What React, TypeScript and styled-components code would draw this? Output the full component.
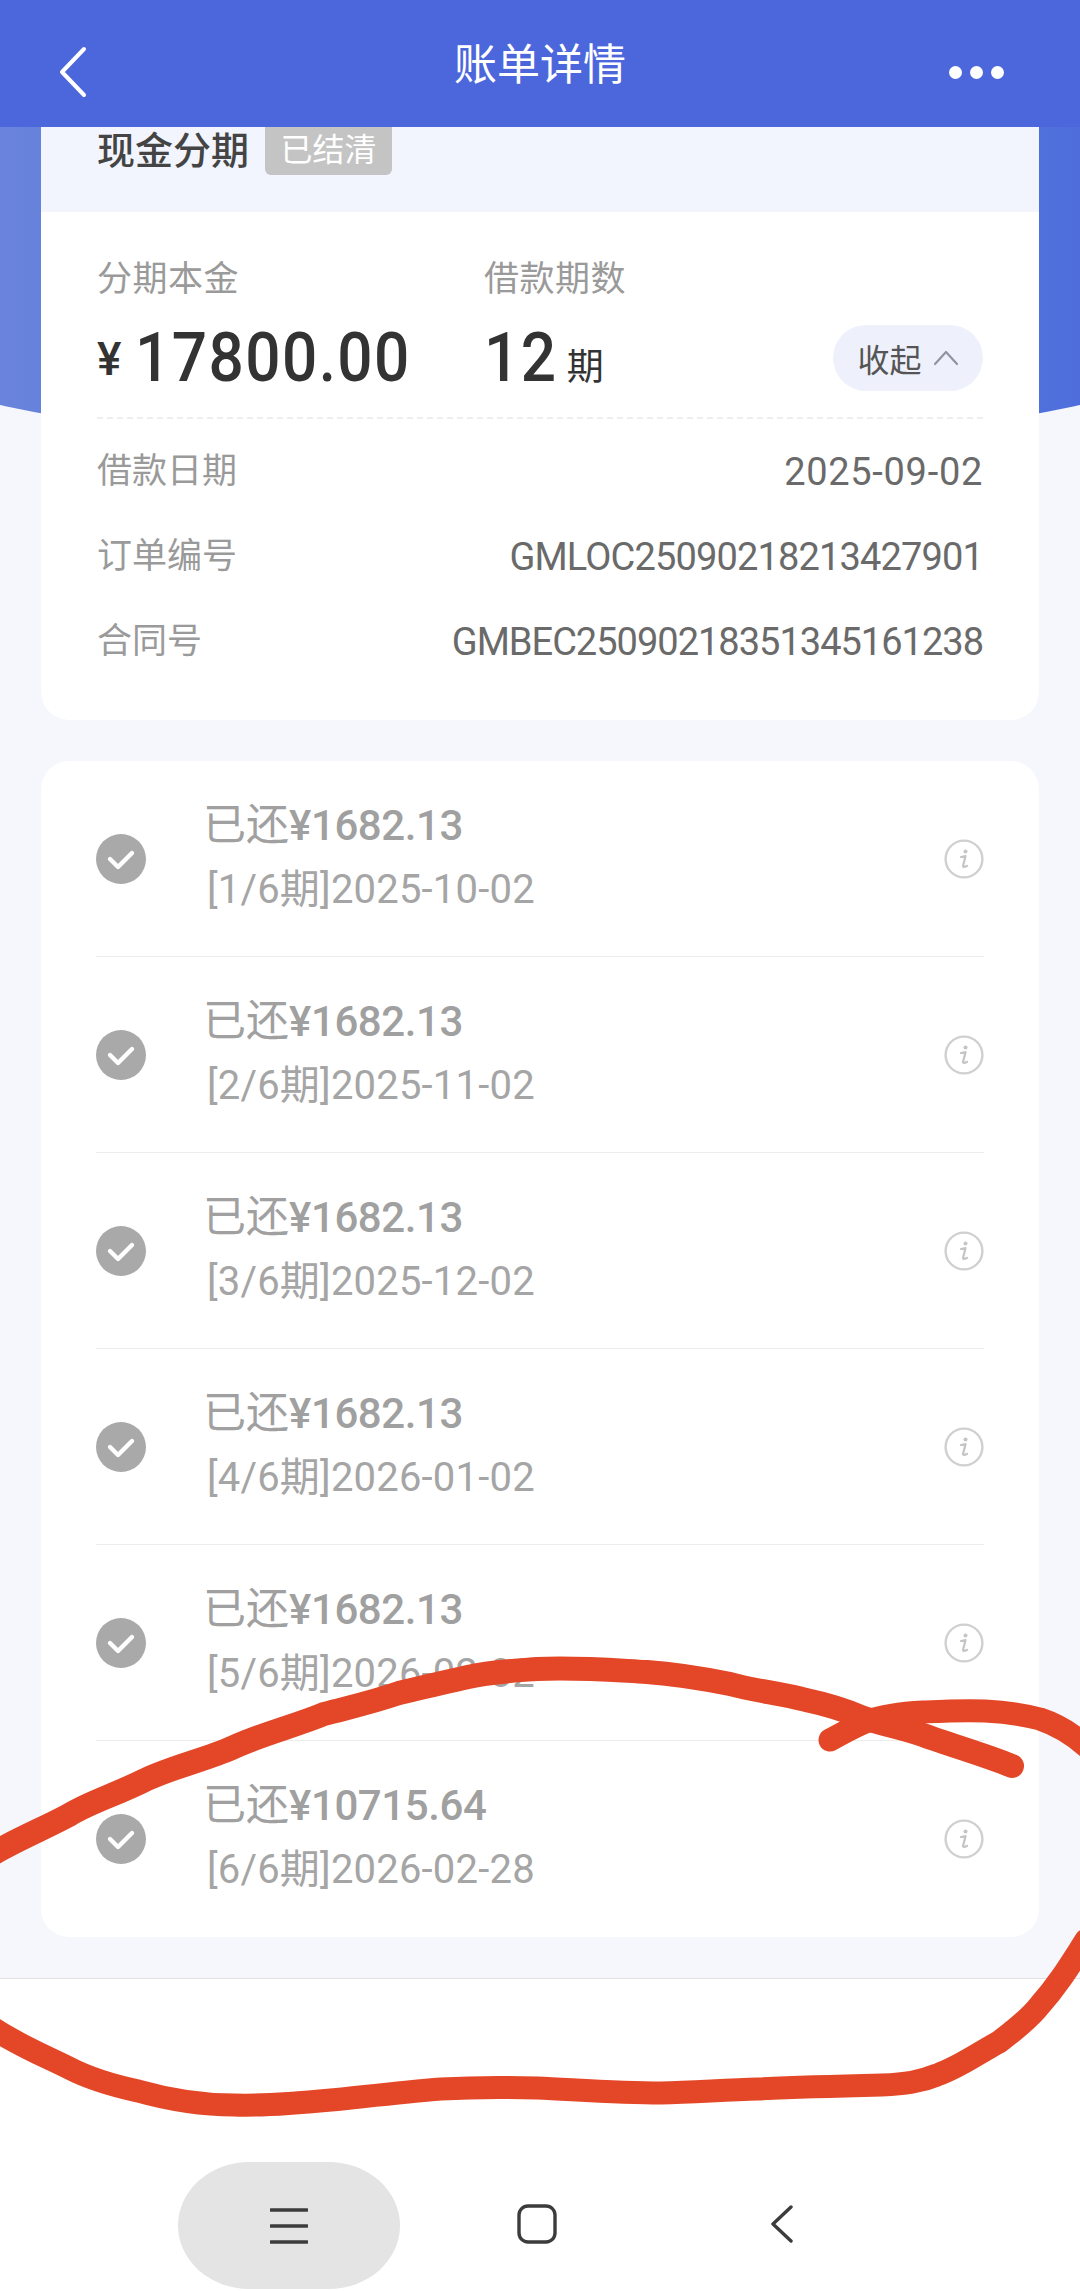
import React from "react";
import styled, { createGlobalStyle } from "styled-components";

const SANS = `"Roboto", "Noto Sans CJK SC", sans-serif`;

const INFO_ROWS = [
  { label: "借款日期", value: "2025-09-02", spacing: 0.7 },
  { label: "订单编号", value: "GMLOC25090218213427901", spacing: -0.85 },
  { label: "合同号", value: "GMBEC25090218351345161238", spacing: -1 },
];

const REPAYMENTS = [
  { amount: "1682.13", period: "[1/6期]", date: "2025-10-02" },
  { amount: "1682.13", period: "[2/6期]", date: "2025-11-02" },
  { amount: "1682.13", period: "[3/6期]", date: "2025-12-02" },
  { amount: "1682.13", period: "[4/6期]", date: "2026-01-02" },
  { amount: "1682.13", period: "[5/6期]", date: "2026-02-02" },
  { amount: "10715.64", period: "[6/6期]", date: "2026-02-28" },
];

const App = () => {
  return (
    <Page>
      <GlobalStyle />
      <Hero />
      <Header>
        <svg width="34" height="52" viewBox="0 0 34 52" fill="none">
          <path d="M28 3 L6 26 L28 49" stroke="#fff" strokeWidth="4" strokeLinecap="round" strokeLinejoin="round" />
        </svg>
        <Title>账单详情</Title>
        <Dots>
          <i />
          <i />
          <i />
        </Dots>
      </Header>
      <Content>
        <SummaryCard>
          <CardHead>
            <HeadTitle>现金分期</HeadTitle>
            <Tag>已结清</Tag>
          </CardHead>
          <CardBody>
            <Figures>
              <Figure $width={387}>
                <FigureLabel>分期本金</FigureLabel>
                <FigureValue>
                  <Yen>¥</Yen>
                  <Big>17800.00</Big>
                </FigureValue>
              </Figure>
              <Figure $width={349}>
                <FigureLabel>借款期数</FigureLabel>
                <FigureValue>
                  <Big>12</Big>
                  <Unit>期</Unit>
                </FigureValue>
              </Figure>
              <Collapse>
                收起
                <svg width="26" height="18" viewBox="0 0 26 18" fill="none">
                  <path d="M2 15 L13 3 L24 15" stroke="#8f94a3" strokeWidth="2.2" strokeLinecap="round" strokeLinejoin="round" />
                </svg>
              </Collapse>
            </Figures>
            <Dashed />
            {INFO_ROWS.map((row) => (
              <InfoRow key={row.label}>
                <InfoLabel>{row.label}</InfoLabel>
                <InfoValue $spacing={row.spacing}>{row.value}</InfoValue>
              </InfoRow>
            ))}
          </CardBody>
        </SummaryCard>
        <ListCard>
          {REPAYMENTS.map((item) => (
            <Repayment key={item.period}>
              <svg width="50" height="50" viewBox="0 0 50 50" fill="none">
                <circle cx="25" cy="25" r="25" fill="#a9a9a9" />
                <path d="M14 25 L22 33 L36 19" stroke="#fff" strokeWidth="4.4" strokeLinecap="round" strokeLinejoin="round" />
              </svg>
              <RepaymentText>
                <Paid>
                  已还<b>¥{item.amount}</b>
                </Paid>
                <Period>
                  {item.period}
                  {item.date}
                </Period>
              </RepaymentText>
              <svg width="40" height="40" viewBox="0 0 40 40" fill="none">
                <circle cx="20" cy="20" r="18.4" stroke="#d0d0d0" strokeWidth="2.4" />
                <circle cx="21.5" cy="12.5" r="2" fill="#c4c4c4" />
                <path d="M17 18 L21.5 17.2 L19 27 Q19 28.6 23 27" stroke="#c4c4c4" strokeWidth="2.2" strokeLinecap="round" strokeLinejoin="round" />
              </svg>
            </Repayment>
          ))}
        </ListCard>
      </Content>
      <Footer />
      <NavBar>
        <NavPill>
          <svg width="38" height="36" viewBox="0 0 38 36" fill="none">
            <path d="M1 2 H37 M1 18 H37 M1 34 H37" stroke="#3c3c3e" strokeWidth="3.4" strokeLinecap="round" />
          </svg>
        </NavPill>
        <NavHome>
          <svg width="40" height="40" viewBox="0 0 40 40" fill="none">
            <rect x="2" y="2" width="36" height="36" rx="9" stroke="#3c3c3e" strokeWidth="3.4" />
          </svg>
        </NavHome>
        <NavBack>
          <svg width="24" height="38" viewBox="0 0 24 38" fill="none">
            <path d="M21 2 L3 19 L21 36" stroke="#3c3c3e" strokeWidth="3.4" strokeLinecap="round" strokeLinejoin="round" />
          </svg>
        </NavBack>
      </NavBar>
      <Scribble width="1080" height="2291" viewBox="0 0 1080 2291" fill="none">
        <path
          d="M1012 1766 C985 1755 950 1745 923 1735 C900 1727 880 1724 861 1717 C840 1708 825 1704 806 1700 C780 1693 755 1691 730 1684 C700 1678 675 1674 647 1672 C610 1670 575 1667 537 1669 C510 1671 490 1672 468 1677 C445 1682 420 1688 399 1693 C370 1703 350 1707 324 1714 C295 1726 265 1733 234 1747 C205 1760 175 1766 145 1780 C115 1795 90 1802 69 1815 C45 1828 20 1838 -6 1853"
          stroke="#e34727"
          strokeWidth="24"
          strokeLinecap="round"
        />
        <path
          d="M-6 2029 C20 2046 45 2056 69 2068 C92 2080 115 2086 138 2091 C170 2100 200 2105 234 2105 C265 2106 300 2103 331 2100 C370 2096 405 2092 441 2089 C475 2087 505 2087 537 2088 C580 2090 620 2093 661 2093 C695 2092 725 2090 758 2089 C800 2087 840 2086 882 2085 C905 2084 920 2082 937 2075 C960 2067 980 2052 999 2042 C1015 2030 1030 2018 1040 2005 C1058 1985 1070 1965 1086 1940"
          stroke="#e34727"
          strokeWidth="23"
          strokeLinecap="round"
        />
        <path
          d="M830 1740 C845 1732 855 1726 868 1721 C885 1715 905 1713 923 1712 C945 1711 965 1710 985 1711 C1005 1712 1025 1715 1040 1719 C1055 1724 1070 1732 1086 1746"
          stroke="#e34727"
          strokeWidth="23"
          strokeLinecap="round"
        />
      </Scribble>
    </Page>
  );
};

const GlobalStyle = createGlobalStyle`
  html, body {
    margin: 0;
    padding: 0;
    background: #fff;
  }
  * {
    box-sizing: border-box;
  }
`;

const Page = styled.div`
  position: relative;
  width: 1080px;
  height: 2291px;
  overflow: hidden;
  display: flex;
  flex-direction: column;
  background: #f5f7fc;
  font-family: ${SANS};
`;

const Hero = styled.div`
  position: absolute;
  top: 0;
  left: 0;
  width: 100%;
  height: 293px;
  background: linear-gradient(90deg, #6a84dc 0, #6682da 40px, #5070dc 1040px, #4f6edc 100%);

  &::after {
    content: "";
    position: absolute;
    top: 133px;
    left: -216px;
    width: 1512px;
    height: 320px;
    border-radius: 50%;
    background: linear-gradient(90deg, #6a84dc 216px, #6682da 256px, #5070dc 1256px, #4f6edc 1296px);
  }
`;

const Header = styled.header`
  position: relative;
  z-index: 2;
  flex: none;
  height: 127px;
  padding: 46px 76px 0 56px;
  display: flex;
  align-items: flex-start;
  justify-content: space-between;
  background: #4c67dc;
`;

const Title = styled.h1`
  position: absolute;
  top: 34px;
  left: 0;
  width: 100%;
  margin: 0;
  text-align: center;
  color: #fff;
  font-size: 43px;
  line-height: 62px;
  font-weight: 400;
`;

const Dots = styled.div`
  display: flex;
  gap: 8px;
  margin-top: 20px;

  i {
    width: 13px;
    height: 13px;
    border-radius: 50%;
    background: #fff;
  }
`;

const Content = styled.main`
  position: relative;
  flex: none;
  display: flex;
  flex-direction: column;
  gap: 41px;
  padding: 0 41px;
`;

const SummaryCard = styled.section`
  height: 593px;
  background: #fff;
  border-radius: 0 0 28px 28px;
  overflow: hidden;
`;

const CardHead = styled.div`
  height: 85px;
  padding-left: 56px;
  display: flex;
  align-items: flex-start;
  background: #f2f5fe;
`;

const HeadTitle = styled.div`
  margin-top: -1px;
  color: #444;
  font-size: 38px;
  line-height: 50px;
  font-weight: 500;
`;

const Tag = styled.div`
  margin-left: 16px;
  width: 127px;
  height: 48px;
  border-radius: 0 0 6px 6px;
  background: #c4c4c4;
  color: #fff;
  font-size: 32px;
  line-height: 46px;
  text-align: center;
`;

const CardBody = styled.div`
  padding: 40px 56px 0;
`;

const Figures = styled.div`
  display: flex;
  align-items: flex-end;
  height: 165px;
  padding-bottom: 25px;
`;

const Figure = styled.div<{ $width: number }>`
  width: ${({ $width }) => $width}px;
`;

const FigureLabel = styled.div`
  color: #9a9a9a;
  font-size: 35px;
  line-height: 44px;
  letter-spacing: 0.5px;
`;

const FigureValue = styled.div`
  margin-top: 21px;
  display: flex;
  align-items: baseline;
  color: #333;
  height: 69px;
`;

const Yen = styled.span`
  position: relative;
  top: -6px;
  font-size: 46px;
  font-weight: 500;
  margin-right: 14px;
`;

const Big = styled.span`
  display: inline-block;
  margin-right: -24px;
  font-size: 69px;
  line-height: 69px;
  font-weight: 500;
  letter-spacing: 1.6px;
  transform: scaleX(0.9);
  transform-origin: left;
`;

const Unit = styled.span`
  position: relative;
  top: -1px;
  margin-left: 25px;
  font-size: 37px;
  font-weight: 400;
`;

const Collapse = styled.div`
  width: 150px;
  height: 66px;
  margin-left: auto;
  margin-bottom: 1px;
  display: flex;
  align-items: center;
  justify-content: center;
  gap: 11px;
  border-radius: 33px;
  background: #eef1fc;
  color: #555;
  font-size: 32px;
`;

const Dashed = styled.div`
  border-top: 2px dashed #eeeeee;
  margin-bottom: 10px;
`;

const InfoRow = styled.div`
  height: 85px;
  display: flex;
  align-items: center;
  justify-content: space-between;
`;

const InfoLabel = styled.span`
  position: relative;
  top: -4px;
  color: #9a9a9a;
  font-size: 35px;
`;

const InfoValue = styled.span<{ $spacing: number }>`
  color: #6a6a6a;
  font-size: 38px;
  letter-spacing: ${({ $spacing }) => $spacing}px;
`;

const ListCard = styled.section`
  display: flex;
  flex-direction: column;
  background: #fff;
  border-radius: 28px;
  padding: 0 55px;
`;

const Repayment = styled.div`
  height: 196px;
  display: flex;
  align-items: center;
  border-bottom: 1px solid #ececec;

  &:last-child {
    border-bottom: none;
  }
`;

const RepaymentText = styled.div`
  flex: 1;
  margin-left: 57px;
`;

const Paid = styled.div`
  margin-top: -8px;
  color: #a0a0a0;
  font-size: 43px;
  line-height: 60px;

  b {
    font-size: 42px;
    font-weight: 500;
    letter-spacing: -0.4px;
  }
`;

const Period = styled.div`
  margin: 9px 0 0 4px;
  color: #a5a5a5;
  font-size: 40px;
  line-height: 50px;
  letter-spacing: 0.2px;
`;

const Footer = styled.div`
  flex: none;
  margin-top: 41px;
  height: 184px;
  background: #fff;
  border-top: 1px solid #e2e2e2;
`;

const NavBar = styled.nav`
  flex: 1;
  position: relative;
  background: #fff;
`;

const NavPill = styled.div`
  position: absolute;
  left: 178px;
  top: 0;
  width: 222px;
  height: 127px;
  display: flex;
  align-items: center;
  justify-content: center;
  border-radius: 72px / 64px;
  background: #e4e4e4;
`;

const NavHome = styled.div`
  position: absolute;
  left: 517px;
  top: 42px;
  display: flex;
`;

const NavBack = styled.div`
  position: absolute;
  left: 770px;
  top: 43px;
  display: flex;
`;

const Scribble = styled.svg`
  position: absolute;
  top: 0;
  left: 0;
  z-index: 3;
  pointer-events: none;
`;

export default App;
